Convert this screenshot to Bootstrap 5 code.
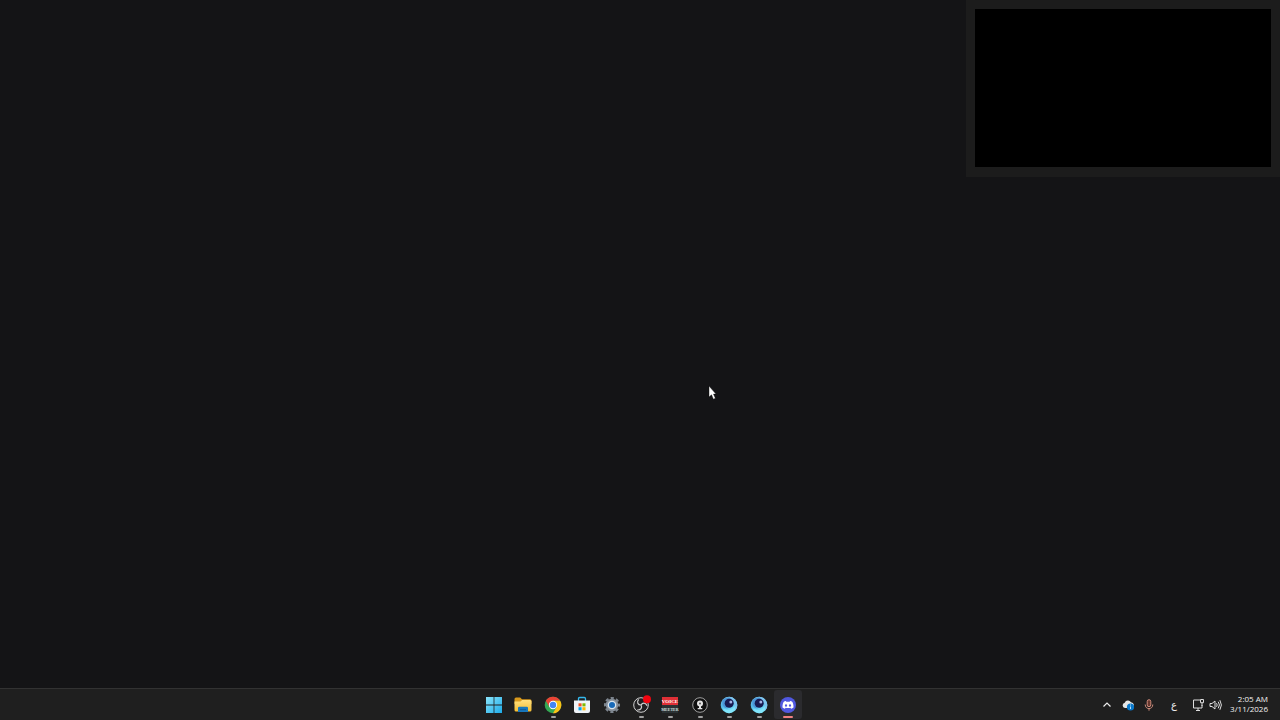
<!DOCTYPE html>
<html lang="en">
<head>
<meta charset="utf-8">
<meta name="viewport" content="width=device-width, initial-scale=1">
<title>Desktop</title>
<link href="https://cdn.jsdelivr.net/npm/bootstrap@5.3.0/dist/css/bootstrap.min.css" rel="stylesheet">
<style>
body { background: #141416; color: #f2f2f2; font-family: "Open Sans", "Noto Sans", sans-serif; }
.preview { width: 314px; max-width: 100%; padding: 9px 9px 10px; background: #1c1c1c; }
.preview-screen { aspect-ratio: 296 / 158; background: #000; }
.pointer { position: absolute; left: 708px; top: 385px; }
.taskbar { display: grid; grid-template-columns: 1fr 324px 1fr; height: 32px; background: #1f1f1f; border-top: 1px solid #323232; }
.apps { grid-column: 2; padding-left: 2px; }
.app { position: relative; width: 28px; height: 29px; padding: 0; border: 0; border-radius: 3px; background: none; display: flex; align-items: center; justify-content: center; }
.app svg, .tray svg { display: block; }
.app.running::after { content: ""; position: absolute; bottom: 1px; left: 12px; width: 5px; height: 2px; border-radius: 1px; background: #a0a0a0; }
.app.active { background: #2b2b2e; }
.app.active::after { left: 9px; width: 10px; background: #f08080; }
.tray { padding-right: 12px; }
.tray button { padding: 0; border: 0; background: none; color: inherit; }
.lang { width: 12px; margin: 0 12px 0 14px; font: 10px/14px "DejaVu Sans", sans-serif; }
.tray .clock { width: 41px; margin-left: 5px; font-size: 8px; font-weight: 500; line-height: 10px; text-align: right; white-space: nowrap; padding-bottom: 1px; }
</style>
</head>
<body class="vh-100 d-flex flex-column overflow-hidden">
<main class="flex-grow-1 d-flex justify-content-end align-items-start position-relative">
  <section class="preview" aria-label="Preview"><div class="preview-screen"></div></section>
  <svg class="pointer" width="10" height="16" viewBox="0 0 10 16" aria-hidden="true"><path d="M1 1v11l2.500-2.200 1.900 4.400 2-.9-1.900-4.200H8z" fill="#fff" stroke="#050505" stroke-width=".4"/></svg>
</main>
<svg width="0" height="0" class="position-absolute" aria-hidden="true">
  <defs>
    <linearGradient id="win" x2="1" y2="1"><stop stop-color="#8be5fb"/><stop offset="1" stop-color="#1cabe9"/></linearGradient>
    <linearGradient id="folder" x2="0" y2="1"><stop stop-color="#ffe181"/><stop offset="1" stop-color="#f5bd32"/></linearGradient>
    <linearGradient id="swirl" x1="0" y1="0" x2=".4" y2="1"><stop stop-color="#8fd0f0"/><stop offset=".5" stop-color="#4fb2e4"/><stop offset="1" stop-color="#7be8fb"/></linearGradient>
    <symbol id="orb" viewBox="0 0 18 18"><circle cx="9" cy="9" r="8.300" fill="url(#swirl)"/><path d="M9 .7a8.300 8.300 0 0 1 8.300 8.300c0 2.500-1 4.500-2.500 6C15.500 10 15 6 9 .7z" fill="#7fc4ee"/><path d="M2.500 4.500C4.500 1.500 8.500 1 11.500 2.200 8 3 5.500 5 5.500 8c0 2 1 3.500 2.500 4.500C4 12.500 1.500 9 2.500 4.500z" fill="#4a95d6"/><circle cx="9.200" cy="7.200" r="4.500" fill="#191a50"/><circle cx="10.800" cy="6" r="1.500" fill="#a6b5e6"/><path d="M3 12.500c4 2.600 9.500 1.800 12.500-2.500-.5 4-3 6.800-6.500 7.200C6.500 17 4.200 15.300 3 12.500z" fill="#82e5fb"/></symbol>
  </defs>
</svg>
<footer class="taskbar flex-shrink-0">
  <nav class="apps d-flex justify-content-between align-items-center" aria-label="Apps">
    <button class="app" aria-label="Start"><svg width="18" height="18" viewBox="0 0 18 18"><path d="M1 1h7.600v7.600H1zM9.400 1H17v7.600H9.400zM1 9.400h7.600V17H1zM9.400 9.400H17V17H9.400z" fill="url(#win)"/></svg></button>
    <button class="app" aria-label="File Explorer"><svg width="18" height="18" viewBox="0 0 18 18"><path d="M.5 3q0-1.500 1.500-1.500h4.200L8 3.200h8q1.500 0 1.500 1.500V8H.5z" fill="#d99a1d"/><path d="M.5 5.500h6L8.200 4H16q1.500 0 1.500 1.500V14q0 1.500-1.500 1.500H2Q.5 15.500.5 14z" fill="url(#folder)"/><path d="M4 16v-4q0-1.300 1.300-1.300h7.400Q14 10.700 14 12v4z" fill="#1878bd"/><path d="M6 13.200h6v1H6z" fill="#105a96"/></svg></button>
    <button class="app running" aria-label="Chrome"><svg width="18" height="18" viewBox="0 0 18 18"><circle cx="9" cy="9" r="8.300" fill="#34a853"/><path d="M1.810 4.850A8.300 8.300 0 0 1 16.190 4.850H9L5.400 11.080z" fill="#ea4335"/><path d="M16.190 4.850A8.300 8.300 0 0 1 9 17.300l3.600-6.220L9 4.850z" fill="#fbc116"/><circle cx="9" cy="9" r="4.150" fill="#fff"/><circle cx="9" cy="9" r="3.200" fill="#4285f4"/></svg></button>
    <button class="app" aria-label="Microsoft Store"><svg width="18" height="18" viewBox="0 0 18 18"><path d="M5.500 5V2.700q0-1.200 1.200-1.200h4.600q1.200 0 1.200 1.200V5" fill="none" stroke="#35b9ed" stroke-width="1.300"/><path d="M1 4.500h16V15q0 2-2 2H3q-2 0-2-2z" fill="#f0f4f7"/><path d="M5.500 7.300h3.100v3.100H5.500z" fill="#f25022"/><path d="M9.400 7.300h3.100v3.100H9.400z" fill="#7fba00"/><path d="M5.500 11.200h3.100v3.100H5.500z" fill="#00a4ef"/><path d="M9.400 11.200h3.100v3.100H9.400z" fill="#ffb900"/></svg></button>
    <button class="app" aria-label="Settings"><svg width="18" height="18" viewBox="0 0 18 18"><circle cx="9" cy="9" r="6.300" fill="#8a929b"/><circle cx="9" cy="9" r="6.800" fill="none" stroke="#7d858e" stroke-width="2.500" stroke-dasharray="3.100 2.240" stroke-dashoffset="1.500"/><circle cx="9" cy="9" r="4.300" fill="#d9e5ef"/><circle cx="9" cy="9" r="3" fill="#1769b8"/></svg></button>
    <button class="app running" aria-label="OBS Studio"><svg width="20" height="20" viewBox="0 0 20 20"><circle cx="10" cy="10" r="7.300" fill="#202022" stroke="#d0d0d0"/><g fill="none" stroke="#d0d0d0" stroke-width="1.200"><path d="M10 10C6.800 10 5.500 7 7.600 4.300"/><path d="M10 10C6.800 10 5.500 7 7.600 4.300" transform="rotate(120 10 10)"/><path d="M10 10C6.800 10 5.500 7 7.600 4.300" transform="rotate(240 10 10)"/></g><circle cx="16" cy="4.300" r="4" fill="#f30510"/></svg></button>
    <button class="app running" aria-label="Voicemeeter"><svg width="18" height="18" viewBox="0 0 18 18" font-family="Liberation Serif, serif" font-size="5" font-weight="bold" text-anchor="middle"><path d="M1 1h16v8H1z" fill="#df3036"/><path d="M1 9h16v8H1z" fill="#2a3133"/><text x="9" y="6.500" fill="#fff">VOICE</text><text x="9" y="14.500" font-size="4" fill="#d9e0e0">MEETER</text></svg></button>
    <button class="app running" aria-label="Webcam"><svg width="18" height="18" viewBox="0 0 18 18"><circle cx="9" cy="9" r="7.300" fill="#101010" stroke="#a0a0a0"/><circle cx="9" cy="7.500" r="3" fill="#e4e4e4"/><circle cx="9" cy="7.500" r="1" fill="#555"/><path d="M8 10h2v2h1.300v1.200H6.700V12H8z" fill="#e4e4e4"/></svg></button>
    <button class="app running" aria-label="Camera app"><svg width="18" height="18"><use href="#orb"/></svg></button>
    <button class="app running" aria-label="Camera app, second window"><svg width="18" height="18"><use href="#orb"/></svg></button>
    <button class="app running active" aria-label="Discord"><svg width="18" height="18" viewBox="0 0 18 18"><circle cx="9" cy="9" r="8" fill="#5058e0"/><path d="M6.900 5.100c-.9.100-1.700.4-2.300.8C3.700 7.500 3.400 9.500 3.500 11.600c.8.600 1.600 1 2.400 1.200l.7-1.100c1.600.5 3.200.5 4.800 0l.7 1.100c.8-.2 1.600-.6 2.400-1.200.1-2.100-.2-4.100-1.100-5.700-.6-.4-1.400-.7-2.300-.8l-.4.700H7.300z" fill="#fff"/><ellipse cx="7" cy="9.500" rx="1.050" ry="1.200" fill="#5058e0"/><ellipse cx="11" cy="9.500" rx="1.050" ry="1.200" fill="#5058e0"/></svg></button>
  </nav>
  <div class="tray d-flex align-items-center justify-content-end">
    <button aria-label="Show hidden icons"><svg width="10" height="10" viewBox="0 0 10 10"><path d="M1.500 6.500L5 3l3.500 3.500" fill="none" stroke="#eee" stroke-width="1.200"/></svg></button>
    <button class="ms-2 me-2" aria-label="OneDrive"><svg width="16" height="14" viewBox="0 0 16 14"><path d="M5 10a2.700 2.700 0 0 1-.3-5.300A3.600 3.600 0 0 1 11 4.200a3 3 0 0 1 1 5.800z" fill="#e4e6e6"/><circle cx="10.500" cy="9" r="3.600" fill="#0878cb"/><path d="M10.500 8.500V11M10.500 6.500v1" stroke="#b5dcf5"/></svg></button>
    <button aria-label="Microphone"><svg width="10" height="14" viewBox="0 0 10 14"><rect x="3.200" y="1.700" width="3.600" height="7" rx="1.800" fill="#68382f" stroke="#dc9585" stroke-width=".9"/><path d="M1.200 6.500c0 5.500 7.600 5.500 7.600 0M5 10.500v2.200" fill="none" stroke="#dc9585" stroke-width=".9"/></svg></button>
    <button class="lang" lang="ar" aria-label="Arabic keyboard">ع</button>
    <button aria-label="Network"><svg width="13" height="14" viewBox="0 0 13 14"><path d="M8 2H1.500v8H10V7M4 12.500h4M6 10v2.500" fill="none" stroke="#ddd"/><path d="M8.500 1.500h3v3.200h-3zM10 4.700V8" fill="none" stroke="#ddd"/></svg></button>
    <button class="ms-1" aria-label="Volume"><svg width="13" height="14" viewBox="0 0 13 14"><path d="M1 5.500h2L6 3v8L3 8.500H1zM7.500 5.200q1.400 1.800 0 3.600M9.200 3.700q2.500 3.300 0 6.600M10.900 2.200q3 4.800 0 9.600" fill="none" stroke="#ddd"/></svg></button>
    <button class="clock">2:05 AM<br>3/11/2026</button>
  </div>
</footer>
<script src="https://cdn.jsdelivr.net/npm/bootstrap@5.3.0/dist/js/bootstrap.bundle.min.js"></script>
</body>
</html>
